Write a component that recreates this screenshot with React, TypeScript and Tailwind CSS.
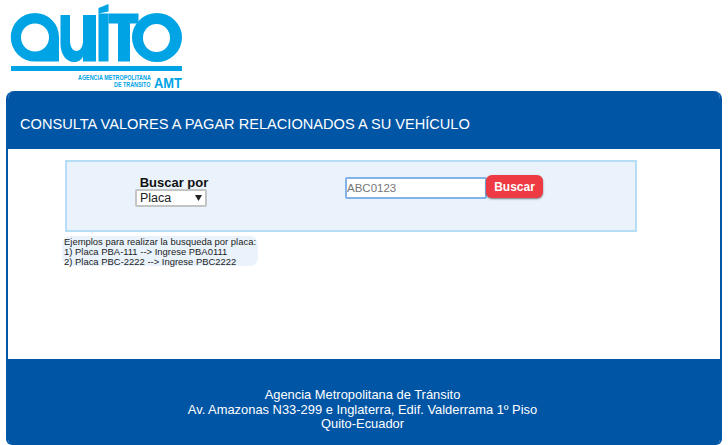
export default function App() {
  return (
    <div className="h-[445px] w-[728px] overflow-hidden bg-white font-['Liberation_Sans',Arial,sans-serif]">
      <header className="h-[91px]">
        <svg width="200" height="91" viewBox="0 0 200 91">
          <path
            fillRule="evenodd"
            fill="#00a4e4"
            d="M35 13a24 24 0 0 1 24 24v24.500H35a24.250 24.250 0 0 1 0-48.500ZM35 23.500a14 14 0 1 0 0 28a14 14 0 0 0 0-28Z"
          />
          <path
            fill="#00a4e4"
            d="M60.500 15h9.500v26c0 6 3 10 6.500 10s6.500-4 6.500-10V15h13v46.500h-13v-5c-2 4-5 5.500-9 5.500c-8 0-13.500-8-13.500-18Z"
          />
          <path fill="#00a4e4" d="M98.500 13.500h10v48h-10ZM98.500 8l10-4v7.500l-10 2Z" />
          <path fill="#00a4e4" d="M108.500 13.500h30v10h-8.500v38h-12v-38h-9.500Z" />
          <path
            fillRule="evenodd"
            fill="#00a4e4"
            d="M157 13a25 24.500 0 0 1 0 49a25 24.500 0 0 1 0-49ZM156.500 24a13.500 14 0 1 0 0 28a13.500 14 0 0 0 0-28Z"
          />
          <rect x="11" y="66" width="171" height="5" fill="#00a4e4" />
          <text transform="translate(78 80) scale(1 1.22)" fontSize="5.400" fontWeight="700" fill="#00a4e4">
            AGENCIA METROPOLITANA
          </text>
          <text transform="translate(114 87) scale(1 1.22)" fontSize="5.400" fontWeight="700" fill="#00a4e4">
            DE TRÁNSITO
          </text>
          <text x="154" y="88" fontSize="14" fontWeight="700" fill="#00a4e4" textLength="28" lengthAdjust="spacingAndGlyphs">
            AMT
          </text>
        </svg>
      </header>

      <main className="mx-[6px] flex h-[354px] flex-col overflow-hidden rounded-t-[8px] rounded-b-[6px] border-x-2 border-[#0055a5] bg-white">
        <div className="flex h-[58px] items-center bg-[#0055a5] pl-[12px] pt-[9px] text-[14.600px] text-white">
          CONSULTA VALORES A PAGAR RELACIONADOS A SU VEHÍCULO
        </div>

        <div className="flex-1 pl-[57px] pt-[11px]">
          <div className="flex h-[72px] w-[572px] border-2 border-[#b7dcf6] bg-[#eaf3fb]">
            <div className="flex w-[214px] flex-col items-center pt-[14px]">
              <span className="text-[13px] leading-[13px] font-bold text-[#111]">Buscar por</span>
              <div className="relative -ml-[6px] flex">
                <select className="h-[18px] w-[72px] appearance-none rounded-[2px] border-2 border-[#c4c4c4] bg-white pl-[3px] text-[12.500px] leading-[14px] text-[#222] outline-none">
                  <option>Placa</option>
                </select>
                <svg className="absolute right-[5px] top-[6px]" width="7" height="6" viewBox="0 0 7 6">
                  <path d="M0 0h7L3.500 6Z" fill="#222" />
                </svg>
              </div>
            </div>
            <div className="flex items-start pl-[64px] pt-[13px]">
              <input
                className="mt-[2px] h-[22px] w-[142px] rounded-[2px] border-2 border-[#82b4ea] bg-white pl-0 text-[11.500px] text-[#777] outline-none"
                defaultValue="ABC0123"
              />
              <button className="-ml-px h-[23px] w-[57px] rounded-[6px] bg-[#ee3a43] text-[12px] font-bold text-white shadow-[0_1px_2px_rgba(0,0,0,0.5)]">
                Buscar
              </button>
            </div>
          </div>
          <div className="-ml-[3px] mt-[4px] h-[30px] w-[196px] rounded-[8px] bg-[#eaf3fb] pl-[2px] pt-[1px] text-[9.450px] leading-[10px] text-[#222]">
            <p>Ejemplos para realizar la busqueda por placa:</p>
            <p>1) Placa PBA-111 --&gt; Ingrese PBA0111</p>
            <p>2) Placa PBC-2222 --&gt; Ingrese PBC2222</p>
          </div>
        </div>

        <footer className="flex h-[86px] flex-col items-center bg-[#0055a5] pr-[3px] pt-[29px] text-[12.900px] leading-[14.500px] text-white">
          <p>Agencia Metropolitana de Tránsito</p>
          <p>Av. Amazonas N33-299 e Inglaterra, Edif. Valderrama 1º Piso</p>
          <p>Quito-Ecuador</p>
        </footer>
      </main>
    </div>
  );
}
